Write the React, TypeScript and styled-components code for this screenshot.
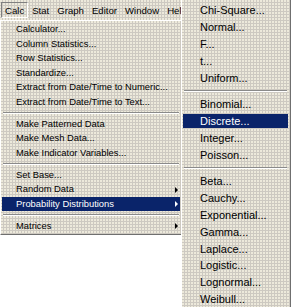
import React from 'react';
import styled, { createGlobalStyle, css } from 'styled-components';

const GlobalStyle = createGlobalStyle`
  html, body {
    margin: 0;
    padding: 0;
    background: #ffffff;
  }
  #root {
    width: 291px;
    height: 307px;
  }
`;

// Win2000 dithered menu face
const dither = css`
  background-color: #cdc9c1;
  background-image: radial-gradient(circle at 1px 1px, #fffbea 0.6px, transparent 0.9px);
  background-size: 3px 3px;
`;

const Screen = styled.div`
  position: relative;
  width: 291px;
  height: 307px;
  overflow: hidden;
  font-family: Tahoma, "Liberation Sans", Arial, sans-serif;
  color: #000;
`;

const MenuBar = styled.div`
  ${dither};
  display: flex;
  align-items: center;
  width: 181px;
  height: 20px;
  padding-left: 1px;
  box-sizing: border-box;
  overflow: hidden;
  font-size: 9.6px;
`;

const BarItem = styled.div<{ $open?: boolean }>`
  height: 16px;
  line-height: 15px;
  padding: 0 3px;
  box-sizing: border-box;
  border: 1px solid transparent;
  white-space: nowrap;
  ${p =>
    p.$open &&
    css`
      border-color: #808080 #ffffff #ffffff #808080;
    `}
`;

const Dropdown = styled.div`
  ${dither};
  position: absolute;
  top: 20px;
  left: 0;
  width: 181px;
  box-sizing: border-box;
  padding: 1px;
  border-top: 1px solid #ffffff;
  border-left: 1px solid #ffffff;
  border-bottom: 1px solid #6f6f6f;
  font-size: 9.4px;
  display: flex;
  flex-direction: column;
`;

const MainItem = styled.div<{ $active?: boolean }>`
  position: relative;
  height: 14.5px;
  line-height: 14.5px;
  padding-left: 14px;
  white-space: nowrap;
  ${p =>
    p.$active &&
    css`
      background: #0a246a;
      color: #ffffff;
    `}
`;

const Arrow = styled.span<{ $active?: boolean }>`
  position: absolute;
  right: 2px;
  top: 4.5px;
  width: 0;
  height: 0;
  border-top: 3px solid transparent;
  border-bottom: 3px solid transparent;
  border-left: 3px solid ${p => (p.$active ? '#ffffff' : '#000000')};
`;

const Separator = styled.div<{ $space: number }>`
  height: 0;
  margin: ${p => p.$space}px 1px;
  border-top: 1px solid #8a8a8a;
  border-bottom: 1px solid #ffffff;
`;

const SubMenu = styled.div`
  ${dither};
  position: absolute;
  top: 0;
  left: 181px;
  width: 110px;
  height: 307px;
  box-sizing: border-box;
  padding: 2px 2px 0 1px;
  border-left: 1px solid #ffffff;
  border-right: 1px solid #6f6f6f;
  font-size: 11px;
  display: flex;
  flex-direction: column;
`;

const SubItem = styled.div<{ $active?: boolean }>`
  height: 14px;
  line-height: 14px;
  margin: 1.4px 0;
  padding-left: 17px;
  white-space: nowrap;
  ${p =>
    p.$active &&
    css`
      background: #0a246a;
      color: #ffffff;
    `}
`;

type Entry = string | { sep: true };

const mainItems: Entry[] = [
  'Calculator...',
  'Column Statistics...',
  'Row Statistics...',
  'Standardize...',
  'Extract from Date/Time to Numeric...',
  'Extract from Date/Time to Text...',
  { sep: true },
  'Make Patterned Data',
  'Make Mesh Data...',
  'Make Indicator Variables...',
  { sep: true },
  'Set Base...',
  'Random Data',
  'Probability Distributions',
  { sep: true },
  'Matrices',
];

const withArrow = ['Random Data', 'Probability Distributions', 'Matrices'];

const subItems: Entry[] = [
  'Chi-Square...',
  'Normal...',
  'F...',
  't...',
  'Uniform...',
  { sep: true },
  'Binomial...',
  'Discrete...',
  'Integer...',
  'Poisson...',
  { sep: true },
  'Beta...',
  'Cauchy...',
  'Exponential...',
  'Gamma...',
  'Laplace...',
  'Logistic...',
  'Lognormal...',
  'Weibull...',
];

const App: React.FC = () => {
  return (
    <>
      <GlobalStyle />
      <Screen>
        <MenuBar>
          <BarItem $open>Calc</BarItem>
          <BarItem>Stat</BarItem>
          <BarItem>Graph</BarItem>
          <BarItem>Editor</BarItem>
          <BarItem>Window</BarItem>
          <BarItem>Help</BarItem>
        </MenuBar>

        <Dropdown>
          {mainItems.map((item, i) =>
            typeof item === 'string' ? (
              <MainItem key={i} $active={item === 'Probability Distributions'}>
                {item}
                {withArrow.includes(item) && (
                  <Arrow $active={item === 'Probability Distributions'} />
                )}
              </MainItem>
            ) : (
              <Separator key={i} $space={2.75} />
            )
          )}
        </Dropdown>

        <SubMenu>
          {subItems.map((item, i) =>
            typeof item === 'string' ? (
              <SubItem key={i} $active={item === 'Discrete...'}>
                {item}
              </SubItem>
            ) : (
              <Separator key={i} $space={4} />
            )
          )}
        </SubMenu>
      </Screen>
    </>
  );
};

export default App;
